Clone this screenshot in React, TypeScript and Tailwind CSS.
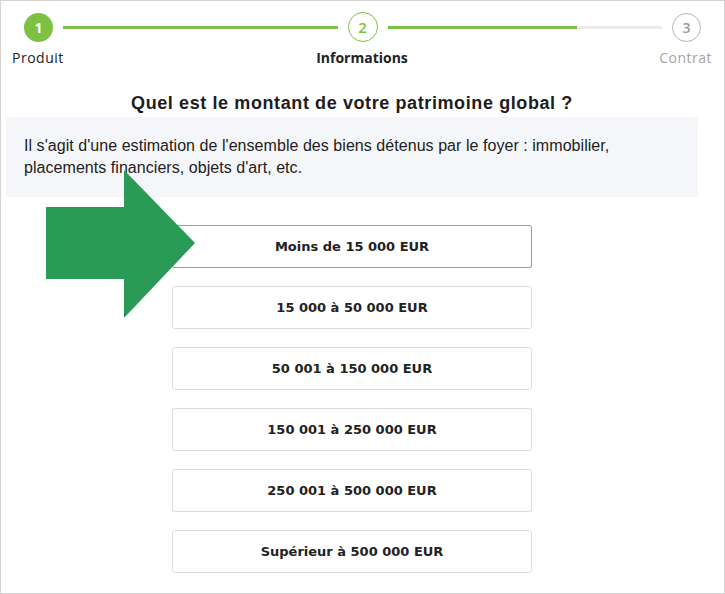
import React from 'react';

const options = [
  'Moins de 15 000 EUR',
  '15 000 à 50 000 EUR',
  '50 001 à 150 000 EUR',
  '150 001 à 250 000 EUR',
  '250 001 à 500 000 EUR',
  'Supérieur à 500 000 EUR',
];

const Stepper: React.FC = () => (
  <div className="font-['Open_Sans',sans-serif]">
    <div className="flex items-center pt-[11px] pl-[23px] pr-[23px]">
      <div className="w-[29px] h-[29px] rounded-full bg-[#7dc142] text-white text-[14px] font-bold flex items-center justify-center">1</div>
      <div className="flex-1 mx-[10px] h-[3px] bg-[#7dc142]" />
      <div className="w-[30px] h-[30px] rounded-full border-[1.5px] border-[#7dc142] text-[#7dc142] text-[15px] font-semibold flex items-center justify-center">2</div>
      <div className="flex-1 mx-[10px] h-[3px] bg-[#ebebeb] flex">
        <div className="w-[69%] h-full bg-[#7dc142]" />
      </div>
      <div className="w-[29px] h-[29px] rounded-full border-[1.5px] border-[#b5b5b5] text-[#9a9a9a] text-[14px] font-semibold flex items-center justify-center">3</div>
    </div>
    <div className="grid grid-cols-3 pl-[11px] pr-[12px] mt-[6px] text-[14px] leading-[20px]">
      <div className="text-[#222] tracking-[0.5px]">Produit</div>
      <div className="text-center font-bold text-[#222]">Informations</div>
      <div className="text-right text-[#a5a5a5] tracking-[0.5px]">Contrat</div>
    </div>
  </div>
);

const Option: React.FC<{ label: string; selected: boolean }> = ({ label, selected }) =>
  selected ? (
    <div className="w-[360px] h-[43px] rounded-[3px] bg-[#7dc142] p-px">
      <div className="w-full h-full rounded-[2px] bg-white text-[13px] font-bold text-[#222] flex items-center justify-center">
        {label}
      </div>
    </div>
  ) : (
    <div className="w-[360px] h-[43px] rounded-[3px] border border-[#dcdcdc] bg-white text-[13px] font-bold text-[#222] flex items-center justify-center">
      {label}
    </div>
  );

export default function App() {
  return (
    <div className="w-[725px] h-[594px] border border-[#d4d4d4] bg-white relative overflow-hidden">
      <Stepper />
      <div className="w-[692px] ml-[5px]">
        <h1 className="mt-[23px] text-center text-[18px] leading-[24px] font-bold tracking-[0.6px] text-[#1d1d1d] font-['Liberation_Sans',sans-serif]">
          Quel est le montant de votre patrimoine global ?
        </h1>
        <div className="mt-[2px] bg-[#f5f6f9] px-[18px] py-[18px] text-[16px] leading-[22px] tracking-[0.05px] text-[#222] font-['Liberation_Sans',sans-serif]">
          Il s'agit d'une estimation de l'ensemble des biens détenus par le foyer : immobilier, placements financiers, objets d'art, etc.
        </div>
        <div className="mt-[28px] flex flex-col items-center gap-[18px] font-['DejaVu_Sans',sans-serif]">
          {options.map((o, i) => (
            <Option key={o} label={o} selected={i === 0} />
          ))}
        </div>
      </div>
      <svg className="absolute left-[45px] top-[169px]" width="149" height="148" viewBox="0 0 149 148">
        <polygon points="0,37 78,37 78,0 149,73 78,148 78,109 0,109" fill="#2a9a57" />
      </svg>
    </div>
  );
}
